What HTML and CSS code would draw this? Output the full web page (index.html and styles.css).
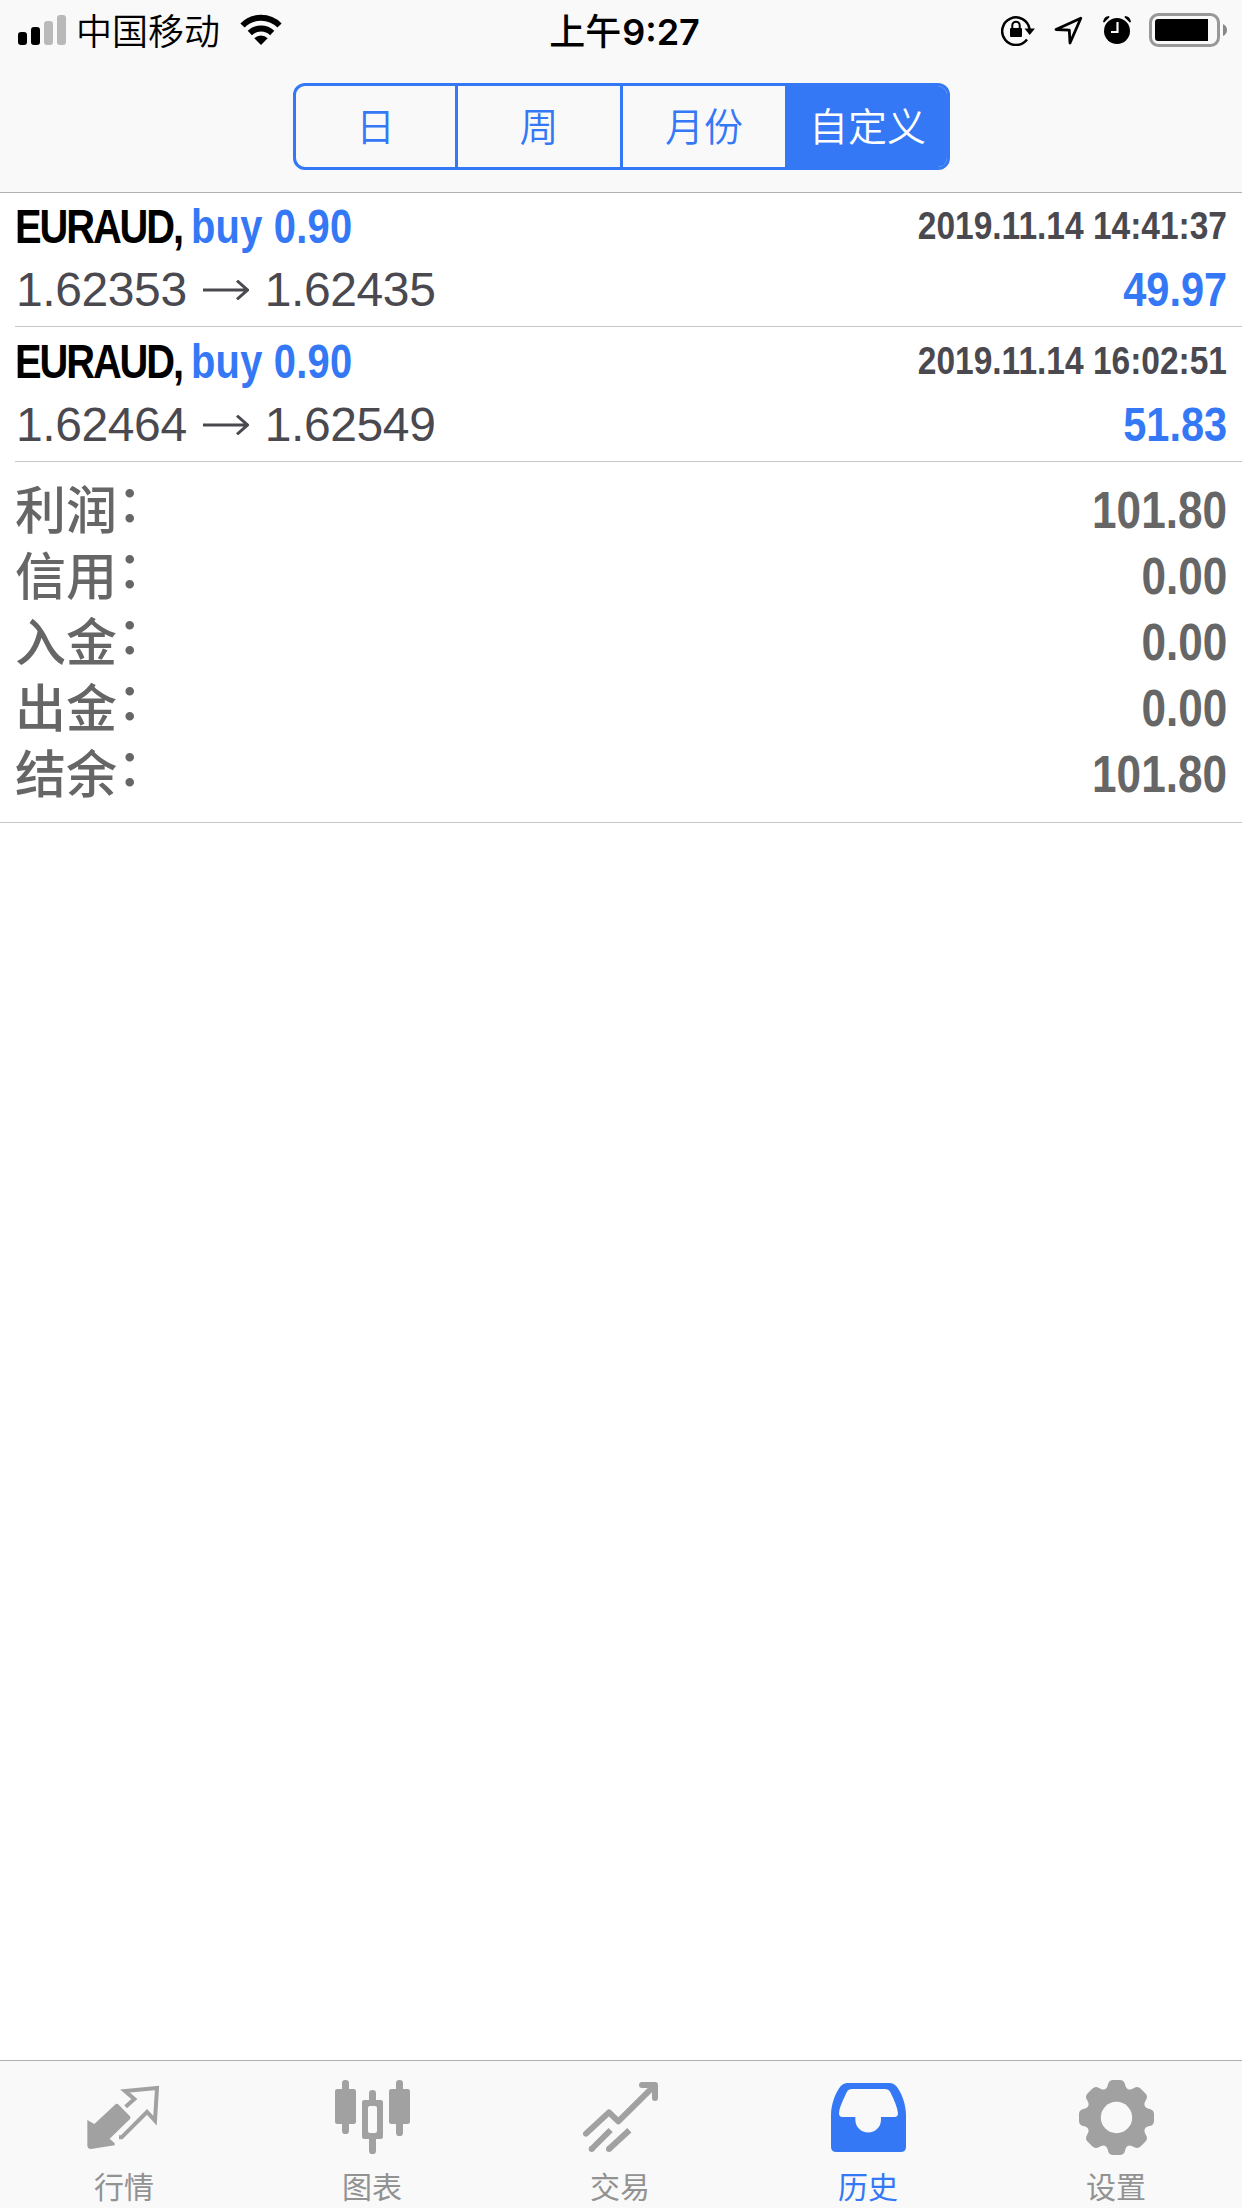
FILE: index.html
```html
<!doctype html>
<html lang="zh-CN">

<head>
  <meta charset="utf-8">
  <title>历史</title>
  <link rel="stylesheet" href="styles.css">
</head>

<body>
  <div class="app">
    <header class="header">
      <div class="status-bar">
        <div class="status-left">
          <svg class="signal" width="48" height="30" viewBox="0 0 48 30">
            <rect x="0" y="17" width="9" height="13" rx="3"/>
            <rect x="13" y="12" width="9" height="18" rx="3"/>
            <rect x="26" y="6" width="9" height="24" rx="3" fill="#b9b9b9"/>
            <rect x="39" y="0" width="9" height="30" rx="3" fill="#b9b9b9"/>
          </svg>
          <span class="carrier">中国移动</span>
          <svg class="wifi" width="42" height="31" viewBox="0 0 42 31">
            <path d="M2.5 11.5a26 26 0 0 1 37 0M9.8 19a16 16 0 0 1 22.4 0" fill="none" stroke="#000" stroke-width="6"/>
            <path d="M21 31l-6.7-6.8a9.5 9.5 0 0 1 13.4 0z"/>
          </svg>
        </div>
        <div class="status-time">上午<span class="clock">9:27</span></div>
        <div class="status-right">
          <svg class="lock" width="34" height="32" viewBox="0 0 34 32">
            <path d="M26 25.5A13.8 13.8 0 1 1 28.6 15" fill="none" stroke="#000" stroke-width="2.5"/>
            <path d="M23.5 14.5H34L28.7 21z"/>
            <rect x="9" y="14" width="12" height="9" rx="1"/>
            <path d="M11.3 15v-3.6a3.7 3.7 0 0 1 7.4 0V15" fill="none" stroke="#000" stroke-width="2"/>
          </svg>
          <svg class="location" width="29" height="29" viewBox="0 0 29 29">
            <path d="M26.8 2.2L2 13.5l13.3 .7 .7 12.8z" fill="none" stroke="#000" stroke-width="2.8" stroke-linejoin="round"/>
          </svg>
          <svg class="alarm" width="28" height="28" viewBox="0 0 28 28">
            <circle cx="14" cy="15" r="13"/>
            <path d="M0 6Q1 0 6 0L6.5 1.3L1.2 6.5zM28 6Q27 0 22 0L21.5 1.3L26.8 6.5z"/>
            <path d="M14.5 6v10H8" fill="none" stroke="#f9f9f9" stroke-width="2.2"/>
          </svg>
          <svg class="battery" width="78" height="34" viewBox="0 0 78 34">
            <rect x="1.5" y="1.5" width="68" height="31" rx="8" fill="none" stroke="#989898" stroke-width="3"/>
            <path d="M9 6H59V28H9Q6 28 6 25V9Q6 6 9 6z"/>
            <path d="M74 11Q78 13 78 17T74 23z" fill="#888"/>
          </svg>
        </div>
      </div>
      <div class="segments">
        <div class="segment">日</div>
        <div class="segment">周</div>
        <div class="segment">月份</div>
        <div class="segment active">自定义</div>
      </div>
    </header>

    <main class="content">
      <div class="deal">
        <div class="deal-row">
          <div class="symbol">EURAUD, <span class="side">buy 0.90</span></div>
          <div class="date">2019.11.14 14:41:37</div>
        </div>
        <div class="deal-row">
          <div class="prices">
            <span>1.62353</span>
            <svg class="arrow" width="46" height="20" viewBox="0 0 46 20"><path d="M0 10H44M34 .7L44.5 10L34 19.3" /></svg>
            <span>1.62435</span>
          </div>
          <div class="profit">49.97</div>
        </div>
      </div>
      <div class="deal">
        <div class="deal-row">
          <div class="symbol">EURAUD, <span class="side">buy 0.90</span></div>
          <div class="date">2019.11.14 16:02:51</div>
        </div>
        <div class="deal-row">
          <div class="prices">
            <span>1.62464</span>
            <svg class="arrow" width="46" height="20" viewBox="0 0 46 20"><path d="M0 10H44M34 .7L44.5 10L34 19.3" /></svg>
            <span>1.62549</span>
          </div>
          <div class="profit">51.83</div>
        </div>
      </div>

      <div class="summary">
        <div class="summary-row"><span class="label">利润<span class="colon">：</span></span><span class="value">101.80</span></div>
        <div class="summary-row"><span class="label">信用<span class="colon">：</span></span><span class="value">0.00</span></div>
        <div class="summary-row"><span class="label">入金<span class="colon">：</span></span><span class="value">0.00</span></div>
        <div class="summary-row"><span class="label">出金<span class="colon">：</span></span><span class="value">0.00</span></div>
        <div class="summary-row"><span class="label">结余<span class="colon">：</span></span><span class="value">101.80</span></div>
      </div>
    </main>

    <nav class="tab-bar">
      <div class="tab">
        <svg class="tab-icon" viewBox="0 0 225 225">
          <path d="M1 120L22 132L84 74Q90 69 95 74L129 109Q132 113 129 117L68 176L83 190V196L12 207Q1 207 1 196z"/>
          <path d="M116 80L142 57L114 33L210 24L204 122L180 96L104 172H96" fill="none" stroke="currentColor" stroke-width="12"/>
        </svg>
        <span>行情</span>
      </div>
      <div class="tab">
        <svg class="tab-icon" viewBox="0 0 225 225">
          <rect x="0" y="27" width="63" height="105" rx="7"/>
          <rect x="21" y="0" width="21" height="162" rx="10"/>
          <rect x="102" y="30" width="21" height="192" rx="10"/>
          <rect x="81" y="60" width="63" height="117" rx="7"/>
          <rect x="99" y="78" width="27" height="81" rx="6" fill="#f9f9f9"/>
          <rect x="162" y="27" width="63" height="105" rx="7"/>
          <rect x="183" y="0" width="21" height="168" rx="10"/>
        </svg>
        <span>图表</span>
      </div>
      <div class="tab">
        <svg class="tab-icon" viewBox="0 0 225 225">
          <g fill="none" stroke="currentColor" stroke-width="18">
            <path d="M9 161L78 97L106 124L215 16M177 15H216V54" stroke-linecap="round" stroke-linejoin="round"/>
            <path d="M26 207L83 150M78 207L139 151"/>
          </g>
          <circle cx="26" cy="207" r="9"/>
          <circle cx="78" cy="207" r="9"/>
        </svg>
        <span>交易</span>
      </div>
      <div class="tab active">
        <svg class="tab-icon" viewBox="0 0 225 225">
          <path fill-rule="evenodd" d="M0 105C0 70 15 35 30 17Q38 9 48 9H177Q187 9 195 17C210 35 225 70 225 105V200Q225 216 209 216H16Q0 216 0 200zM24 100C26 78 38 58 47 37Q52 27 64 27H161Q173 27 178 37C190 60 199 82 201 100Q201 111 191 111H150V119A38.5 38.5 0 0 1 73 119V111H34Q24 111 24 100z"/>
        </svg>
        <span>历史</span>
      </div>
      <div class="tab">
        <svg class="tab-icon" viewBox="0 0 225 225">
          <defs>
            <path id="tooth" d="M77 28Q84 26 87 13Q90 0 103 0H122Q135 0 138 13Q141 26 148 28L112.5 112.5z"/>
          </defs>
          <use href="#tooth"/>
          <use href="#tooth" transform="rotate(45 112.5 112.5)"/>
          <use href="#tooth" transform="rotate(90 112.5 112.5)"/>
          <use href="#tooth" transform="rotate(135 112.5 112.5)"/>
          <use href="#tooth" transform="rotate(180 112.5 112.5)"/>
          <use href="#tooth" transform="rotate(225 112.5 112.5)"/>
          <use href="#tooth" transform="rotate(270 112.5 112.5)"/>
          <use href="#tooth" transform="rotate(315 112.5 112.5)"/>
          <circle cx="112.5" cy="112.5" r="86"/>
          <circle cx="112.5" cy="112.5" r="47" fill="#f9f9f9"/>
        </svg>
        <span>设置</span>
      </div>
    </nav>
  </div>
</body>

</html>
```
FILE: styles.css
```css
* {
  box-sizing: border-box;
}

body {
  margin: 0;
  background-color: #fff;
  font-family: "Liberation Sans", "Noto Sans CJK SC", sans-serif;
}

.app {
  display: flex;
  flex-direction: column;
  width: 1242px;
  height: 2208px;
  white-space: nowrap;
}

/* Header */
.header {
  height: 193px;
  background-color: #f9f9f9;
  border-bottom: 1px solid #b0b0b0;
}

.status-bar {
  display: grid;
  grid-template-columns: 1fr auto 1fr;
  height: 60px;
  padding: 0 15px 0 18px;
  font-family: "Noto Sans CJK SC", sans-serif;
  font-size: 36px;
  line-height: 58px;
}

.status-left,
.status-right {
  display: flex;
  align-items: flex-start;
}

.status-right {
  justify-content: flex-end;
}

.signal {
  margin-top: 15px;
}

.carrier {
  margin: 0 20px 0 10px;
  font-family: "Noto Sans CJK SC DemiLight", "Noto Sans CJK SC", sans-serif;
}

.wifi {
  margin-top: 14px;
}

.status-time {
  padding-left: 4px;
  font-weight: 500;
}

.clock {
  margin-left: 1px;
  font-family: Inter, sans-serif;
  font-weight: 600;
}

.lock {
  margin: 14px 19px 0 0;
}

.location {
  margin: 16px 20px 0 0;
}

.alarm {
  margin: 16px 18px 0 0;
}

.battery {
  margin-top: 13px;
}

.segments {
  display: flex;
  width: 657px;
  height: 87px;
  margin: 23px 0 0 293px;
  border: 3px solid #3478f6;
  border-radius: 12px;
  background-color: #f9f9f9;
  overflow: hidden;
}

.segment {
  width: 165px;
  border-left: 3px solid #3478f6;
  color: #3478f6;
  font-family: "Noto Sans CJK SC DemiLight", "Noto Sans CJK SC", sans-serif;
  font-size: 39px;
  line-height: 77px;
  text-align: center;
}

.segment:first-child {
  width: 159px;
  border-left: none;
}

.segment.active {
  flex: 1;
  background-color: #3478f6;
  color: #fff;
}

/* Deals */
.content {
  flex: 1;
  margin-top: -1px;
}

.deal {
  height: 135px;
  margin-left: 15px;
  padding: 3px 15px 0 0;
  border-bottom: 1px solid #c8c7cc;
}

.deal-row {
  display: flex;
  justify-content: space-between;
  height: 63px;
  line-height: 63px;
}

/* condensed bold */
.symbol,
.date,
.profit,
.value {
  font-weight: 700;
  transform: scaleX(0.865);
  transform-origin: right;
}

.symbol {
  font-size: 48px;
  letter-spacing: -2.5px;
  transform: scaleX(0.83);
  transform-origin: left;
}

.side,
.profit {
  color: #3478f6;
}

.side {
  letter-spacing: 0.3px;
}

.date {
  color: #4a494f;
  font-size: 39px;
  line-height: 61px;
  transform: scaleX(0.859);
}

.prices {
  display: flex;
  align-items: center;
  padding-left: 1px;
  color: #4a494f;
  font-size: 48px;
  letter-spacing: -0.4px;
}

.arrow {
  margin: 0 16px;
  fill: none;
  stroke: #4a494f;
  stroke-width: 3;
}

.profit {
  font-size: 48px;
}

/* Totals */
.summary {
  height: 361px;
  padding: 16px 15px 0;
  border-bottom: 1px solid #c8c7cc;
  color: #666;
}

.summary-row {
  display: flex;
  justify-content: space-between;
  height: 66px;
  line-height: 66px;
}

.label {
  font-family: "Noto Sans CJK SC", sans-serif;
  font-size: 51px;
  font-weight: 500;
  line-height: 59px;
}

.colon {
  display: inline-block;
  transform: translateY(-7px);
}

.value {
  font-size: 51px;
}

/* Tab bar */
.tab-bar {
  display: flex;
  height: 148px;
  background-color: #f9f9f9;
  border-top: 1px solid #b0b0b0;
}

.tab {
  display: flex;
  flex-direction: column;
  align-items: center;
  width: 248px;
  padding-top: 19px;
  color: #929292;
  font-family: "Noto Sans CJK SC", sans-serif;
  font-size: 30px;
  line-height: 36px;
}

.tab-icon {
  width: 75px;
  height: 75px;
  margin-bottom: 12px;
  color: #a1a1a1;
  fill: currentColor;
}

.tab.active,
.tab.active .tab-icon {
  color: #3478f6;
}
```
